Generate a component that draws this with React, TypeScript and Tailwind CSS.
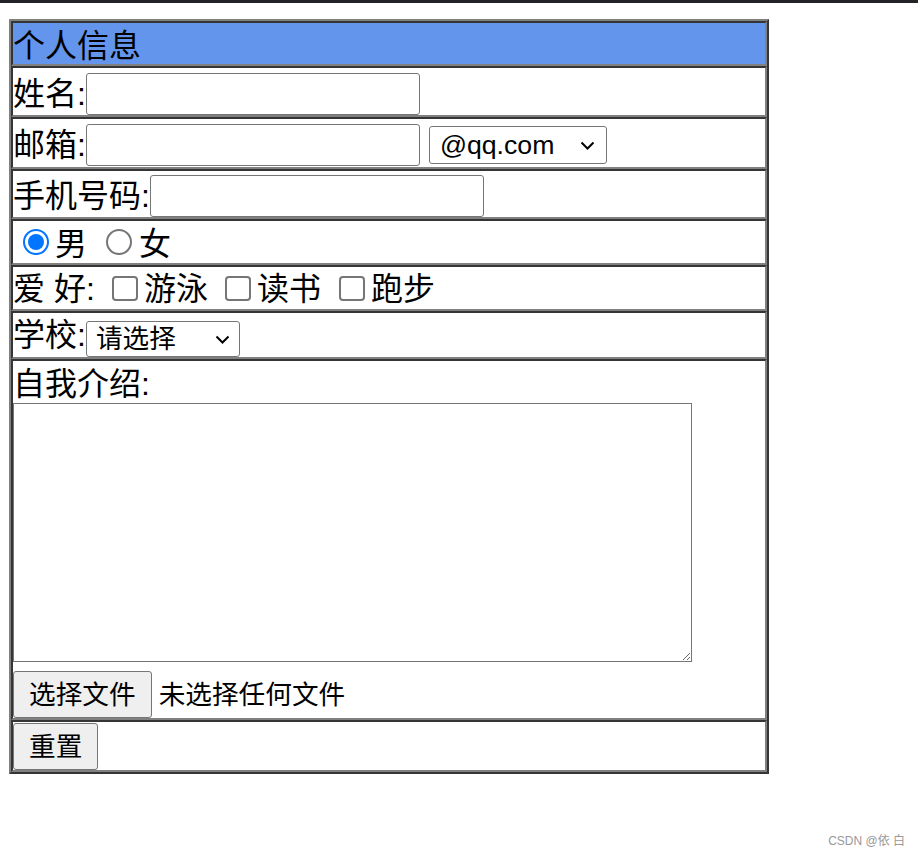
import React from "react";

function Chevron({ className }: { className: string }) {
  return (
    <svg
      className={className}
      width="15"
      height="9"
      viewBox="0 0 15 9"
      fill="none"
      stroke="#000"
      strokeWidth="2"
    >
      <path d="M1.5 1.5 L7.5 7.5 L13.5 1.5" />
    </svg>
  );
}

function Radio({ checked }: { checked?: boolean }) {
  if (checked) {
    return (
      <span className="w-[26px] h-[26px] rounded-full border-2 border-[#0075ff] flex items-center justify-center shrink-0">
        <span className="block w-[16px] h-[16px] rounded-full bg-[#0075ff]" />
      </span>
    );
  }
  return <span className="block w-[26px] h-[26px] rounded-full border-2 border-[#767676] shrink-0" />;
}

function Check() {
  return <span className="block w-[26px] h-[25px] rounded-[4px] border-2 border-[#767676] shrink-0" />;
}

export default function App() {
  const cell =
    "border-2 border-t-[#353535] border-l-[#353535] border-b-[#808080] border-r-[#808080]";
  return (
    <div className="relative w-[918px] h-[857px] bg-white text-black font-[family-name:'Liberation_Sans','Noto_Sans_CJK_SC',sans-serif]">
      <div className="h-[3px] bg-[#222326]" />
      <div className="ml-[9px] mt-[16px] w-[760px] border-2 border-t-[#808080] border-l-[#808080] border-b-[#353535] border-r-[#353535] flex flex-col">
        <div className={`${cell} h-[45px] pt-[4px] bg-[#6495ed] flex items-center text-[32px] leading-[40px]`}>
          个人信息
        </div>

        <div className={`${cell} h-[51px] flex items-end text-[32px]`}>
          <span className="leading-[42px]">姓名:</span>
          <input className="w-[334px] h-[42px] border border-[#767676] rounded-[3px] bg-white" />
        </div>

        <div className={`${cell} h-[52px] flex items-end text-[32px]`}>
          <span className="leading-[42px] mb-[1px]">邮箱:</span>
          <input className="w-[334px] h-[42px] mb-[1px] border border-[#767676] rounded-[3px] bg-white" />
          <div className="relative ml-[9px] mb-[3px] flex">
            <select className="appearance-none w-[178px] h-[38px] border border-[#767676] rounded-[3px] pl-[10px] text-[26.67px] leading-[36px] bg-white">
              <option>@qq.com</option>
              <option>@163.com</option>
            </select>
            <Chevron className="absolute right-[12px] top-[15px] pointer-events-none" />
          </div>
        </div>

        <div className={`${cell} h-[50px] flex items-end text-[32px]`}>
          <span className="leading-[42px]">手机号码:</span>
          <input className="w-[334px] h-[42px] border border-[#767676] rounded-[3px] bg-white" />
        </div>

        <div className={`${cell} h-[46px] flex items-center text-[32px] leading-[42px]`}>
          <span className="ml-[10px] flex">
            <Radio checked />
          </span>
          <span className="ml-[6px] pt-[3px]">男</span>
          <span className="ml-[19px] flex">
            <Radio />
          </span>
          <span className="ml-[7px] pt-[3px]">女</span>
        </div>

        <div className={`${cell} h-[46px] flex items-center text-[32px] leading-[42px]`}>
          <span className="w-[93px] shrink-0 whitespace-pre pt-[1px]">爱 好:</span>
          <span className="ml-[6px] flex">
            <Check />
          </span>
          <span className="ml-[6px] pt-[1px]">游泳</span>
          <span className="ml-[17px] flex">
            <Check />
          </span>
          <span className="ml-[6px] pt-[1px]">读书</span>
          <span className="ml-[18px] flex">
            <Check />
          </span>
          <span className="ml-[6px] pt-[1px]">跑步</span>
        </div>

        <div className={`${cell} h-[48px] flex items-end text-[32px]`}>
          <span className="leading-[42px] mb-[1px]">学校:</span>
          <div className="relative flex">
            <select className="appearance-none w-[154px] h-[36px] border border-[#767676] rounded-[3px] pl-[9px] text-[26.67px] leading-[34px] bg-white">
              <option>请选择</option>
              <option>北京大学</option>
              <option>清华大学</option>
            </select>
            <Chevron className="absolute right-[10px] top-[14px] pointer-events-none" />
          </div>
        </div>

        <div className={`${cell} h-[361px] flex flex-col items-start`}>
          <span className="text-[32px] leading-[42px] pt-[2px]">自我介绍:</span>
          <textarea className="block w-[679px] h-[259px] -mt-[2px] border border-[#767676] bg-white" />
          <div className="mt-[9px] flex items-center">
            <button className="h-[47px] px-[15px] bg-[#efefef] border border-[#767676] rounded-[3px] text-[26.67px] leading-[36px]">
              选择文件
            </button>
            <span className="ml-[7px] text-[26.67px] leading-[36px]">未选择任何文件</span>
          </div>
        </div>

        <div className={`${cell} h-[52px] flex items-end`}>
          <button className="h-[47px] px-[15px] bg-[#efefef] border border-[#767676] rounded-[3px] text-[26.67px] leading-[36px]">
            重置
          </button>
        </div>
      </div>

      <div className="absolute right-[13px] top-[833px] text-[12px] leading-[16px] text-[#999999] whitespace-pre">
        CSDN @依 白
      </div>
    </div>
  );
}
